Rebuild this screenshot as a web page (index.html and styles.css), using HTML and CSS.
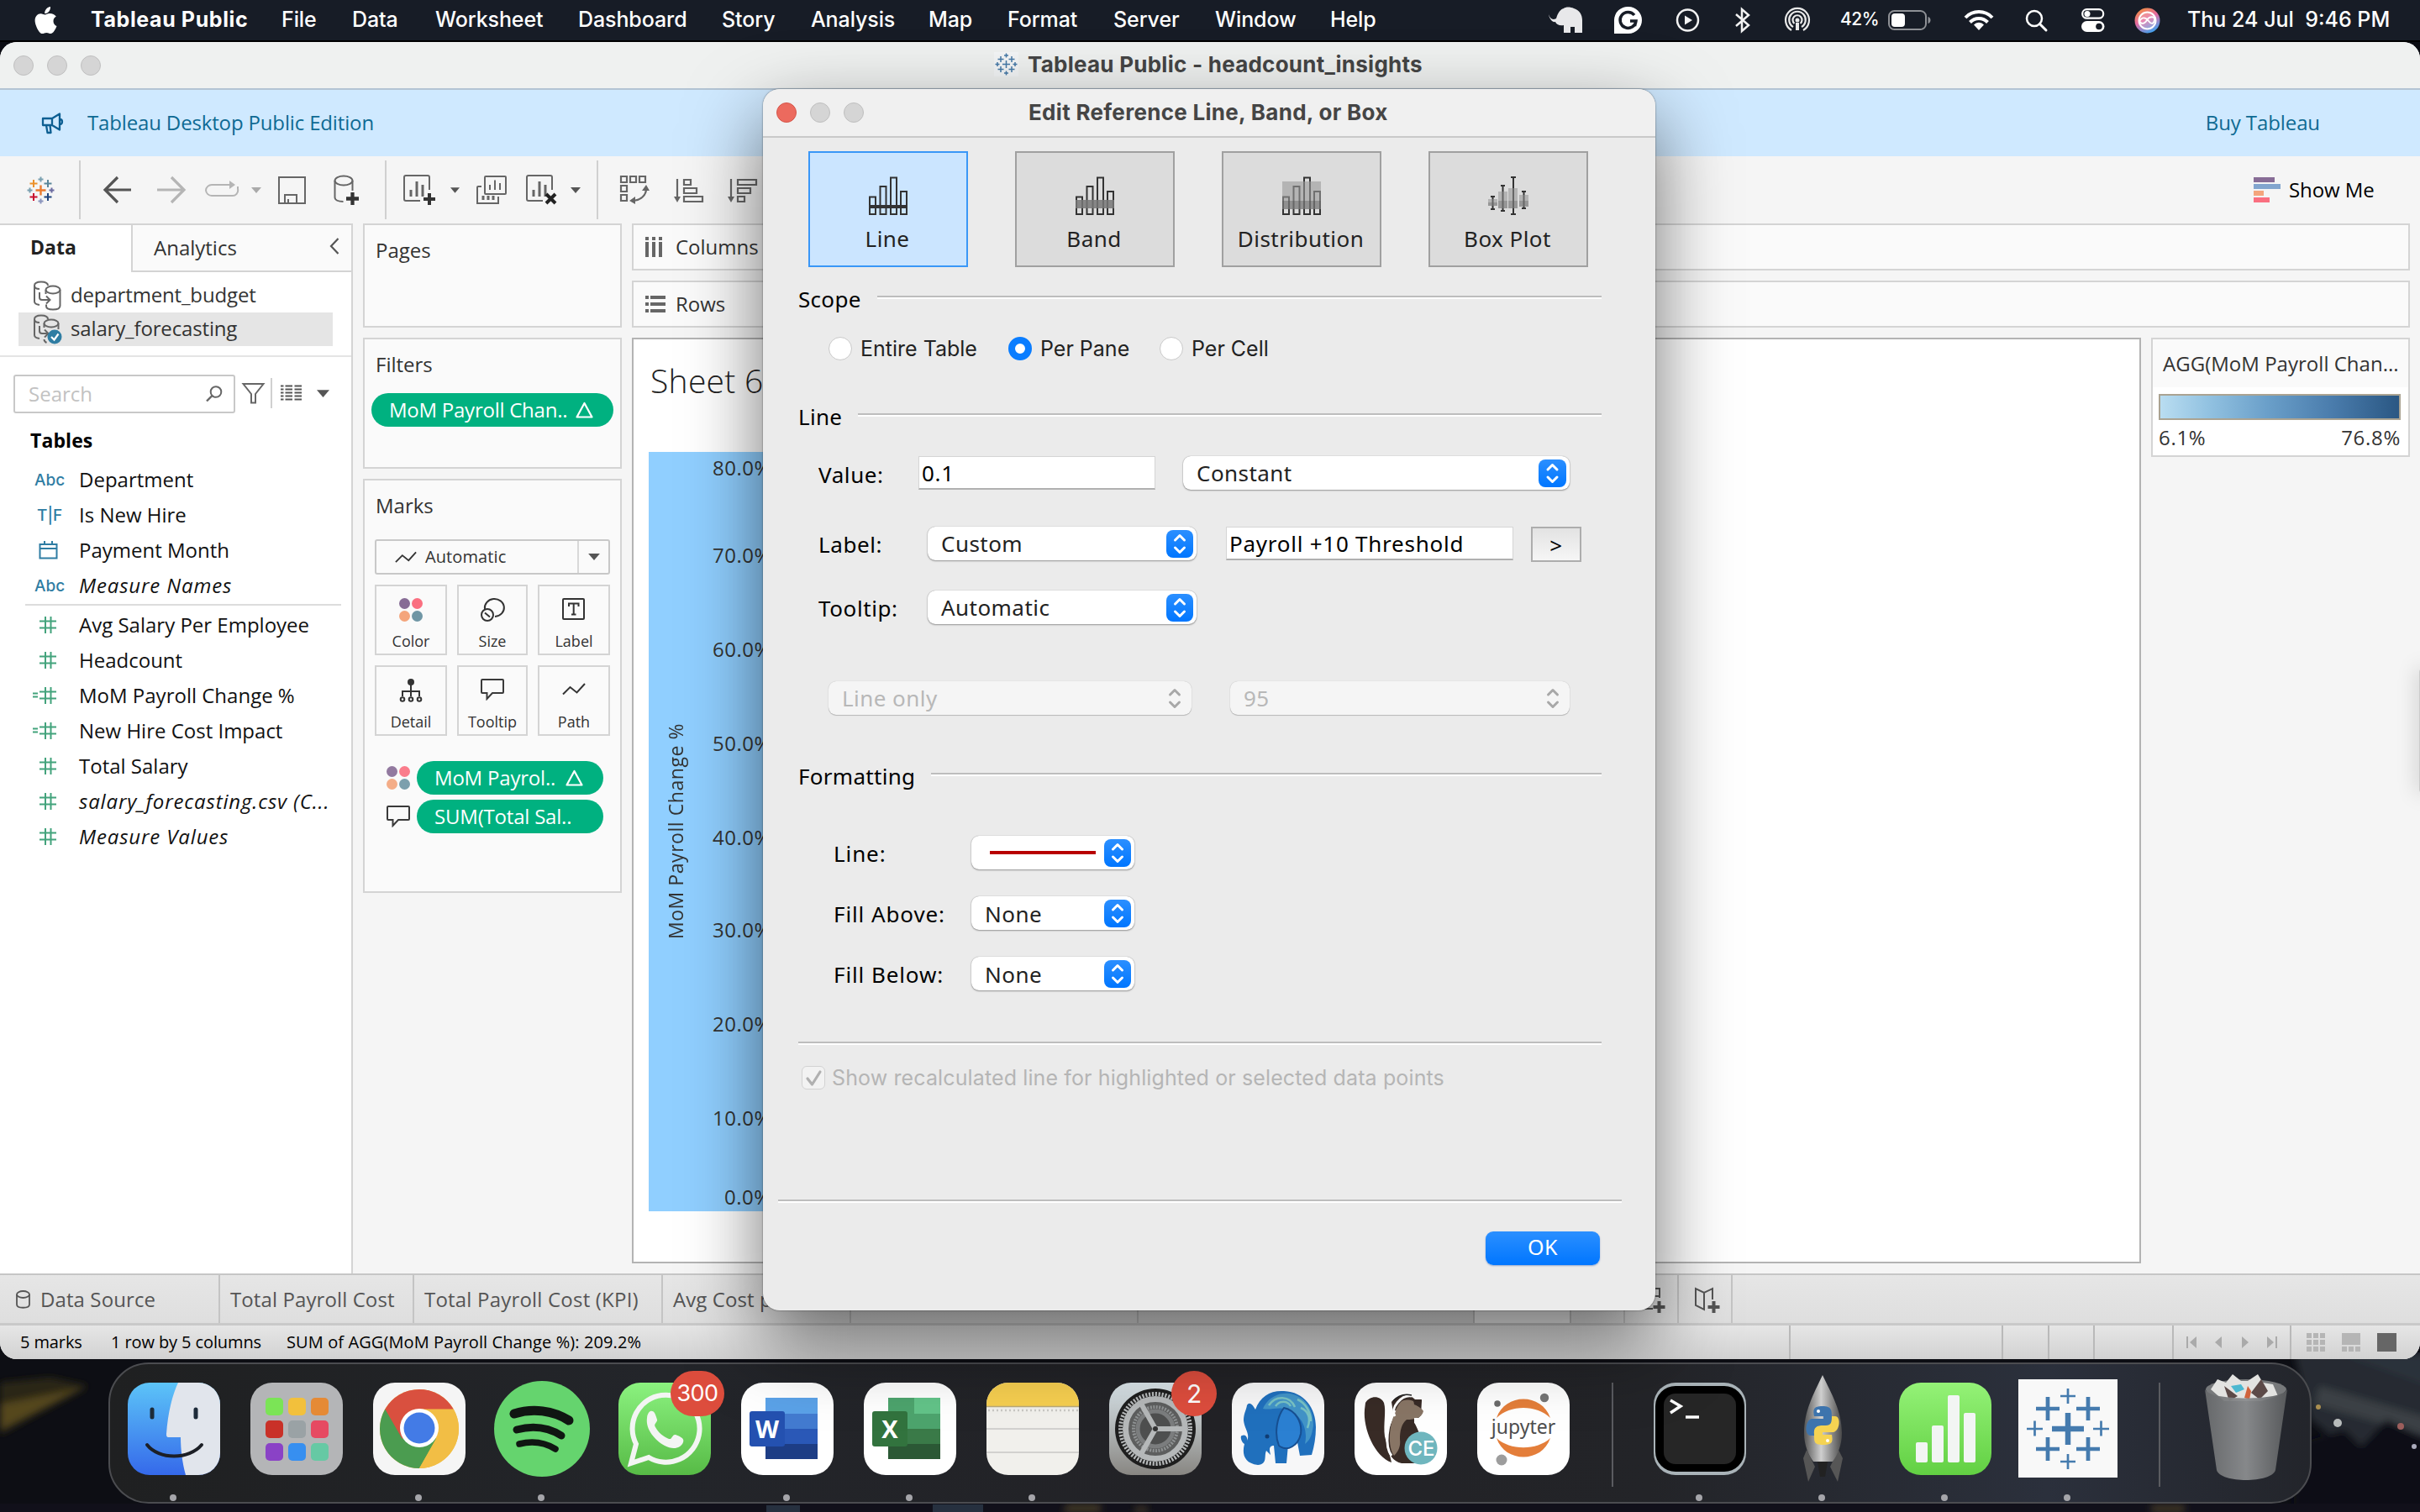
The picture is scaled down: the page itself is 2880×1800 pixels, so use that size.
FILE: index.html
```html
<!DOCTYPE html>
<html lang="en">
<head>
<meta charset="utf-8">
<title>Tableau Public - headcount_insights</title>
<link rel="stylesheet" href="styles.css">
</head>
<body>
<svg class="defs" width="0" height="0">
  <defs>
    <linearGradient id="blueBtn" x1="0" y1="0" x2="0" y2="1"><stop offset="0" stop-color="#2b8fff"/><stop offset="1" stop-color="#0076ff"/></linearGradient>
    <symbol id="plus" viewBox="0 0 14 14"><path d="M5 0h4v5h5v4H9v5H5V9H0V5h5z"/></symbol>
    <symbol id="caret" viewBox="0 0 12 7"><path d="M0 0h12L6 7z"/></symbol>
    <symbol id="dots" viewBox="0 0 28 28"><circle cx="6.5" cy="6.5" r="6.5" fill="#876c96"/><circle cx="21.5" cy="6.5" r="6.5" fill="#fa6f80"/><circle cx="6.5" cy="21.5" r="6.5" fill="#f4a57c"/><circle cx="21.5" cy="21.5" r="6.5" fill="#6f96a5"/></symbol>
    <symbol id="bubble" viewBox="0 0 28 26"><path d="M2 1h24a1 1 0 0 1 1 1v14a1 1 0 0 1-1 1H14l-6.500 7v-7H2a1 1 0 0 1-1-1V2a1 1 0 0 1 1-1z" fill="none" stroke="#3a3a3a" stroke-width="2"/></symbol>
    <symbol id="trend" viewBox="0 0 28 16"><path d="M1 14.500 9.500 6l8 6.500L27 2" fill="none" stroke="#333" stroke-width="2"/></symbol>
    <symbol id="hash" viewBox="0 0 30 22"><path d="M9 6.500h20M9 14.500h20M16 1v20M22.500 1v20" fill="none" stroke="#43a37c" stroke-width="2"/></symbol>
    <symbol id="calc" viewBox="0 0 30 22"><path d="M9 6.500h20M9 14.500h20M16 1v20M22.500 1v20M1 8.500h6M1 12.500h6" fill="none" stroke="#43a37c" stroke-width="2"/></symbol>
    <symbol id="tri" viewBox="0 0 21 20"><path d="M10.500 2 19.500 18.500h-18z" fill="none" stroke="#fff" stroke-width="2.200" stroke-linejoin="round"/></symbol>
    <symbol id="step" viewBox="0 0 32 33"><path d="M10.500 12 16 6.500l5.500 5.500M10.500 21l5.500 5.500 5.500-5.500" fill="none" stroke="currentColor" stroke-width="3" stroke-linecap="round" stroke-linejoin="round"/></symbol>
    <symbol id="bars" viewBox="0 0 46 46"><path d="M1 24.500h7V45H1zM13.500 12h7v33h-7zM26 1.500h7V45h-7zM38 18h7v27h-7z" fill="none" stroke="#333" stroke-width="2"/></symbol>
    <symbol id="db" viewBox="0 0 36 36"><path d="M18 6c0-3-3.500-4.500-8-4.500S2 3 2 6v19c0 2 2.500 3.500 6 4M2 6c0 2 2 4 6 4" fill="none" stroke="#666" stroke-width="2"/><ellipse cx="24" cy="11" rx="8.500" ry="4.500" fill="none" stroke="#666" stroke-width="2"/><path d="M15.500 11v5M32.500 11v19c0 3-4 4.500-8.500 4.500s-8-1.500-8-4v-2M8 14v6c0 2 1 3 3 3h9m-4-4.500 4.500 4.500-4.500 4.500" fill="none" stroke="#666" stroke-width="2"/></symbol>
    <symbol id="dbcheck" viewBox="0 0 36 36"><path d="M18 6c0-3-3.500-4.500-8-4.500S2 3 2 6v19c0 2 2.500 3.500 6 4M2 6c0 2 2 4 6 4" fill="none" stroke="#666" stroke-width="2"/><ellipse cx="22" cy="11" rx="8.500" ry="4.500" fill="none" stroke="#666" stroke-width="2"/><path d="M13.500 11v5M30.500 11v7M8 14v6c0 2 1 3 3 3h7m-4-4.500 4.500 4.500-4.500 4.500M13.500 30c0 2 1 3 3 4" fill="none" stroke="#666" stroke-width="2"/><circle cx="26" cy="27" r="8.500" fill="#2f7da3"/><path d="M22 27l3.500 3.500 5-7" fill="none" stroke="#fff" stroke-width="2.200"/></symbol>
    <symbol id="sheet" viewBox="0 0 38 36"><path d="M31 18V3a2 2 0 0 0-2-2H3a2 2 0 0 0-2 2v26a2 2 0 0 0 2 2h17" fill="none" stroke="#666" stroke-width="2"/><path d="M9 18v8M16 8v18M23 12v14" stroke="#666" stroke-width="3"/></symbol>
  </defs>
</svg>
<div class="desktop">
  <svg class="wallpaper" width="2880" height="190" viewBox="0 0 2880 190">
    <defs><filter id="soft" x="-5%" y="-20%" width="110%" height="140%"><feGaussianBlur stdDeviation="4"/></filter></defs>
    <rect width="2880" height="190" fill="#0d0e14"/>
    <g filter="url(#soft)">
    <path d="M0 36 60 30 105 40 0 98z" fill="#2c2819"/><path d="M0 62 100 42 0 92z" fill="#54471f"/>
    <path d="M2730 0h160v120l-60-20-30 20-50-40z" fill="#252b31"/>
    <path d="M2760 40 2890 78v22L2755 62z" fill="#3b4045"/><path d="M2780 0h110v40z" fill="#2b333a"/>
    <path d="M2730 110l60-18 20 20 30-32 50 24v96h-160z" fill="#0c0d18"/>
    </g>
    <circle cx="2782" cy="84" r="5" fill="#b8bcbc"/><circle cx="2759" cy="65" r="3" fill="#a98e50"/><circle cx="2857" cy="88" r="4" fill="#9b5e5c"/><circle cx="2873" cy="112" r="3" fill="#aab"/>
    <path d="M0 180h2880v10H0z" fill="#11101a"/>
    <path d="M1270 181h40v9h-46zM1350 184h16v6h-16zM2560 182h40v8h-40z" fill="#453a28" filter="url(#soft)"/>
    <path d="M912 182h40v8h-40zM1110 181h60v9h-60z" fill="#26303f"/>
  </svg>

  <div class="menubar">
    <svg class="apple" width="27" height="32" viewBox="0 0 27 32"><path d="M19 0c.300 2.200-.600 4.200-1.800 5.700-1.300 1.500-3.200 2.500-5 2.400C12 6 13 4 14.200 2.600 15.400 1.200 17.500.100 19 0zM25.800 11.500c-2.400 1.500-3.300 3.400-3.300 5.700 0 2.700 1.600 4.900 4 5.900-.600 2-1.700 4-3.100 6-1.200 1.600-2.300 2.900-4.200 2.900-1.900 0-2.500-1.100-4.800-1.100s-3.100 1.100-4.900 1.200c-1.800 0-3.200-1.600-4.400-3.200C2.600 25.500.600 19.700.600 16.500c0-5.200 3.300-8.300 6.900-8.300 2 0 3.700 1.300 5 1.300 1.200 0 3.200-1.400 5.500-1.400 3.600 0 6.300 1.700 7.800 3.400z" fill="#fff"/></svg>
    <span class="app-name">Tableau Public</span><span>File</span><span>Data</span><span>Worksheet</span><span>Dashboard</span><span>Story</span><span>Analysis</span><span>Map</span><span>Format</span><span>Server</span><span>Window</span><span>Help</span>
    <svg width="42" height="32" viewBox="0 0 42 32"><path d="M1 9c2 6 5 7 9 5 2-7 5-11 9-12 2-2 8-2 12 0 7 2 10 8 10 14v15h-9v-7h-5v7h-8v-9c-5 1-9-1-10-4C6 19 2 15 1 9z" fill="#e8e8ea"/></svg>
    <svg width="34" height="32" viewBox="0 0 34 32"><path d="M17 0a16 16 0 1 1 0 32H0V16A16 16 0 0 1 17 0z" fill="#fff"/><path d="M24 10a9.500 9.500 0 1 0 2 7h-7m7-.500-1.500 6.500" fill="none" stroke="#171c26" stroke-width="3.500"/></svg>
    <svg width="29" height="28" viewBox="0 0 29 28"><circle cx="14.500" cy="14" r="12.500" fill="none" stroke="#f2f2f2" stroke-width="2.500"/><path d="M11 8.500v11l9-5.500z" fill="#f2f2f2"/></svg>
    <svg width="24" height="30" viewBox="0 0 24 30"><path d="M4 8l15 13-8 7V2l8 7L4 22" fill="none" stroke="#f2f2f2" stroke-width="2.500"/></svg>
    <svg width="30" height="30" viewBox="0 0 30 30" fill="none" stroke="#e9e9e9" stroke-width="2.200"><path d="M8 27a14 14 0 1 1 14 0M10 23a9.800 9.800 0 1 1 10 0M11.500 19a5.500 5.500 0 1 1 7 0"/><circle cx="15" cy="15" r="2.500" fill="#e9e9e9" stroke="none"/><path d="M15 18v9" stroke-width="4"/></svg>
    <span class="battery-text">42%</span>
    <svg width="52" height="24" viewBox="0 0 52 24"><rect x="1" y="1" width="44" height="22" rx="6.500" fill="none" stroke="#8e9095" stroke-width="2"/><rect x="4" y="4" width="16" height="16" rx="4" fill="#fff"/><path d="M47.500 8c4 1 4 7 0 8z" fill="#8e9095"/></svg>
    <svg width="36" height="26" viewBox="0 0 36 26"><path d="M2 10a22 22 0 0 1 32 0M7.500 15.500a14.500 14.500 0 0 1 21 0" fill="none" stroke="#fff" stroke-width="4"/><path d="M18 25l-6-6.500a8 8 0 0 1 12 0z" fill="#fff"/></svg>
    <svg width="27" height="27" viewBox="0 0 27 27"><circle cx="11" cy="11" r="9" fill="none" stroke="#fff" stroke-width="2.500"/><path d="M17.500 17.500 25 25" stroke="#fff" stroke-width="3" stroke-linecap="round"/></svg>
    <svg width="28" height="28" viewBox="0 0 28 28"><rect x="1.200" y="1.200" width="25" height="10.500" rx="5.200" fill="none" stroke="#fff" stroke-width="2.200"/><circle cx="7" cy="6.500" r="3.500" fill="#fff"/><rect y="15" width="27.500" height="13" rx="6.500" fill="#fff"/><circle cx="21" cy="21.500" r="3.800" fill="#171c26"/></svg>
    <svg width="31" height="31" viewBox="0 0 31 31"><defs><linearGradient id="siri" x1=".2" y1="0" x2=".7" y2="1"><stop offset="0" stop-color="#f3923f"/><stop offset=".45" stop-color="#e66aa0"/><stop offset="1" stop-color="#37a6f5"/></linearGradient></defs><circle cx="15.500" cy="15.500" r="15" fill="url(#siri)"/><circle cx="15.500" cy="15.500" r="10" fill="#ffffff33" stroke="#fff" stroke-width="2"/><path d="M6 17c3-7 8-5 11-1s6 4 7-1-6-5-9 0-7 5-9 1" fill="none" stroke="#fff" stroke-width="1.800"/></svg>
    <span class="clock">Thu 24 Jul&nbsp; 9:46 PM</span>
  </div>

  <div class="window">
    <div class="titlebar">
      <div class="lights"><i></i><i></i><i></i></div>
      <div class="window-title">
        <svg width="29" height="29" viewBox="0 0 29 29"><rect width="29" height="29" fill="#f3f5f6"/><path d="M10 14.500h9M14.500 10v9M4.500 8.500h7M8 5v7M17.500 8.500h7M21 5v7M4.500 20.500h7M8 17v7M17.500 20.500h7M21 17v7M12 4h5M14.500 1.500v5M12 25h5M14.500 22.500v5M1.500 14.500h5M4 12v5M22.500 14.500h5M25 12v5" stroke="#4579a6" stroke-width="1.500"/></svg>
        <span>Tableau Public - headcount_insights</span>
      </div>
    </div>
    <div class="banner">
      <svg width="27" height="26" viewBox="0 0 27 26"><path d="M1 7h11l9-5.500v19L12 15H1zM5 15l1.500 9h4L9.500 15M12 7v8M21 8c4 0 4 6 0 6" fill="none" stroke="#0e5f92" stroke-width="2.300" stroke-linejoin="round"/></svg>
      <span class="edition">Tableau Desktop Public Edition</span>
      <span class="buy">Buy Tableau</span>
    </div>
    <div class="toolbar">
      <svg class="tb-logo" width="33" height="33" viewBox="0 0 33 33" fill="none" stroke-width="2"><path d="M10.500 16.500h12M16.500 10.500v12" stroke="#eb7b2e" stroke-width="2.400"/><path d="M3.500 8.500h9M8 4v9" stroke="#eb912c"/><path d="M20.500 8.500h9M25 4v9" stroke="#5b879b"/><path d="M3.500 24.500h9M8 20v9" stroke="#c8102e"/><path d="M20.500 24.500h9M25 20v9" stroke="#1f447e"/><path d="M13.500 3.500h6M16.500.500v6M.500 16.500h6M3.500 13.500v6" stroke="#7aa0b0"/><path d="M26.500 16.500h6M29.500 13.500v6" stroke="#6a6aa0"/><path d="M13.500 29.500h6M16.500 26.500v6" stroke="#8a94bd"/></svg>
      <b class="sep"></b>
      <svg width="34" height="34" viewBox="0 0 34 34"><path d="M33 17H2.500M17 2 2 17l15 15" fill="none" stroke="#555" stroke-width="3.200"/></svg>
      <svg width="35" height="34" viewBox="0 0 35 34"><path d="M1 17h31.500M18 2l15 15-15 15" fill="none" stroke="#b5b5b5" stroke-width="3.200"/></svg>
      <svg width="41" height="22" viewBox="0 0 41 22"><path d="M12 5H8a7 7 0 0 0-7 6.500A7 7 0 0 0 8 18h24a6.500 6.500 0 0 0 7-8V7M12 5h22" fill="none" stroke="#b5b5b5" stroke-width="2"/><path d="M29 0l7 5-7 5z" fill="#b5b5b5"/></svg>
      <svg width="12" height="7" fill="#aaa"><use href="#caret"/></svg>
      <svg width="33" height="33" viewBox="0 0 33 33"><path d="M1 1h31v31H1zM8 32V22h14v10M12 32v-5" fill="none" stroke="#666" stroke-width="2"/></svg>
      <svg class="drop" width="30" height="36" viewBox="0 0 30 36"><ellipse cx="12" cy="7" rx="10.500" ry="5.500" fill="none" stroke="#666" stroke-width="2"/><path d="M1.500 7v20c0 3 4 5 10 5M22.500 7v12" fill="none" stroke="#666" stroke-width="2"/><use href="#plus" x="15" y="21" width="15" height="15" fill="#333"/></svg>
      <b class="sep"></b>
      <svg class="drop" width="38" height="36" viewBox="0 0 38 36"><use href="#sheet"/><use href="#plus" x="24" y="22" width="14" height="14" fill="#333"/></svg>
      <svg width="11" height="7" fill="#555"><use href="#caret"/></svg>
      <svg class="dup" width="36" height="35" viewBox="0 0 36 35"><rect x="10" y="1" width="25" height="21" rx="1" fill="none" stroke="#666" stroke-width="2"/><path d="M16 11v6M22 5.500V17M28 9v8M6 13H2a1 1 0 0 0-1 1v19h25v-8" fill="none" stroke="#666" stroke-width="2"/><path d="M8 24v5M14 24v5M20 24v5" stroke="#666" stroke-width="3"/></svg>
      <svg class="drop" width="37" height="36" viewBox="0 0 37 36"><use href="#sheet" width="38" height="36"/><path d="M24 23l11 11M35 23 24 34" stroke="#222" stroke-width="4"/></svg>
      <svg width="12" height="7" fill="#555"><use href="#caret"/></svg>
      <b class="sep"></b>
      <svg class="swap" width="36" height="36" viewBox="0 0 36 36"><path d="M2 2h7v7H2zM13 2h7v7h-7zM24 2h7v7h-7zM2 13h7v7H2zM2 24h7v7H2zM32 17c0 7-6 13-15 14" fill="none" stroke="#666" stroke-width="2.200"/><path d="M27 19l5-7 4 7zM19 26v9l-7-4z" fill="#666"/></svg>
      <svg width="36" height="29" viewBox="0 0 36 29"><path d="M4 1v22M12 2h8v6h-8zM12 12h15v6H12zM12 22h22v6H12z" fill="none" stroke="#666" stroke-width="2.200"/><path d="M0 22h8l-4 7z" fill="#666"/></svg>
      <svg width="36" height="29" viewBox="0 0 36 29"><path d="M4 1v22M12 2h22v6H12zM12 12h15v6H12zM12 22h8v6h-8z" fill="none" stroke="#666" stroke-width="2.200"/><path d="M0 22h8l-4 7z" fill="#666"/></svg>
      <div class="show-me"><svg width="32" height="30" viewBox="0 0 32 30"><path d="M0 0h25v6H0z" fill="#876c96"/><path d="M0 8h32v6H0z" fill="#82a5ce"/><path d="M0 16h12v6H0z" fill="#f4a57c"/><path d="M0 24h19v6H0z" fill="#fa6f80"/></svg><span>Show Me</span></div>
    </div>

    <div class="workspace">
      <div class="data-pane">
        <div class="pane-tabs">
          <div class="tab-data">Data</div>
          <div class="tab-analytics">Analytics<svg width="12" height="20" viewBox="0 0 12 20"><path d="M10.500 1 2 10l8.500 9" fill="none" stroke="#555" stroke-width="2.200"/></svg></div>
        </div>
        <div class="source"><svg width="36" height="36"><use href="#db"/></svg><span>department_budget</span></div>
        <div class="source selected"><svg width="36" height="36"><use href="#dbcheck"/></svg><span>salary_forecasting</span></div>
        <div class="search-row">
          <div class="search">Search<svg width="20" height="20" viewBox="0 0 20 20"><circle cx="12" cy="7.500" r="6.300" fill="none" stroke="#666" stroke-width="2"/><path d="M7.500 12 1 18.500" stroke="#666" stroke-width="2.400"/></svg></div>
          <svg class="funnel" width="27" height="25" viewBox="0 0 27 25"><path d="M1.500 1h24L16 13v10.500h-5V13z" fill="none" stroke="#666" stroke-width="2"/></svg>
          <b></b>
          <svg width="25" height="20" viewBox="0 0 25 20"><path d="M0 1.500h3.500M0 5.500h3.500M0 9.500h3.500M0 13.500h3.500M0 17.500h3.500M5.500 1.500H14M5.500 5.500H14M5.500 9.500H14M5.500 13.500H14M5.500 17.500H14M16.500 1.500H25M16.500 5.500H25M16.500 9.500H25M16.500 13.500H25M16.500 17.500H25" stroke="#555" stroke-width="2"/></svg>
          <svg class="view-caret" width="15" height="9" fill="#555"><use href="#caret"/></svg>
        </div>
        <div class="tables">Tables</div>
        <div class="field"><em class="abc">Abc</em><span>Department</span></div>
        <div class="field"><em class="tf">T|F</em><span>Is New Hire</span></div>
        <div class="field"><svg class="cal" width="24" height="22" viewBox="0 0 24 22"><path d="M1.500 4h20v16.500h-20zM1.500 9h20M7 0v5M16 0v5" fill="none" stroke="#2f7da3" stroke-width="2"/></svg><span>Payment Month</span></div>
        <div class="field it"><em class="abc">Abc</em><span>Measure Names</span></div>
        <div class="rule"></div>
        <div class="field"><svg width="30" height="22"><use href="#hash"/></svg><span>Avg Salary Per Employee</span></div>
        <div class="field"><svg width="30" height="22"><use href="#hash"/></svg><span>Headcount</span></div>
        <div class="field"><svg width="30" height="22"><use href="#calc"/></svg><span>MoM Payroll Change %</span></div>
        <div class="field"><svg width="30" height="22"><use href="#calc"/></svg><span>New Hire Cost Impact</span></div>
        <div class="field"><svg width="30" height="22"><use href="#hash"/></svg><span>Total Salary</span></div>
        <div class="field it"><svg width="30" height="22"><use href="#hash"/></svg><span>salary_forecasting.csv (C...</span></div>
        <div class="field it"><svg width="30" height="22"><use href="#hash"/></svg><span>Measure Values</span></div>
      </div>

      <div class="cards">
        <div class="card pages"><div class="card-title">Pages</div></div>
        <div class="card filters"><div class="card-title">Filters</div>
          <div class="pill wide"><span>MoM Payroll Chan..</span><svg width="21" height="20"><use href="#tri"/></svg></div>
        </div>
        <div class="card marks"><div class="card-title">Marks</div>
          <div class="mark-type"><svg width="26" height="16"><use href="#trend"/></svg><span>Automatic</span><i><svg width="14" height="8" fill="#555"><use href="#caret"/></svg></i></div>
          <div class="mark-grid">
            <div><svg width="28" height="28"><use href="#dots"/></svg><span>Color</span></div>
            <div><svg width="29" height="28" viewBox="0 0 29 28"><path d="M5 13A11.500 10.500 0 1 1 17 22" fill="none" stroke="#333" stroke-width="2"/><circle cx="8" cy="20" r="7" fill="none" stroke="#333" stroke-width="2"/><path d="M5 17.500l6 5" stroke="#333" stroke-width="2"/></svg><span>Size</span></div>
            <div><svg width="28" height="26" viewBox="0 0 28 26"><rect x="1" y="1" width="25" height="24" rx="1" fill="none" stroke="#333" stroke-width="2"/><path d="M8 10V6.500h11.500V10M13.700 6.500v13M11 19.500h5.500" fill="none" stroke="#333" stroke-width="2"/></svg><span>Label</span></div>
            <div><svg width="28" height="28" viewBox="0 0 28 28"><circle cx="14" cy="4" r="4" fill="#333"/><path d="M14 4v17M4 21v-6h20v6" fill="none" stroke="#333" stroke-width="2"/><g fill="#fafafa" stroke="#333" stroke-width="2"><circle cx="4" cy="24.500" r="2.300"/><circle cx="14" cy="24.500" r="2.300"/><circle cx="24" cy="24.500" r="2.300"/></g></svg><span>Detail</span></div>
            <div><svg width="28" height="26"><use href="#bubble"/></svg><span>Tooltip</span></div>
            <div><svg width="28" height="26"><use href="#trend" y="4" height="16"/></svg><span>Path</span></div>
          </div>
          <div class="mark-row"><svg width="28" height="28" opacity=".9"><use href="#dots"/></svg><div class="pill"><span>MoM Payrol..</span><svg width="21" height="20"><use href="#tri"/></svg></div></div>
          <div class="mark-row"><svg width="28" height="26"><use href="#bubble"/></svg><div class="pill"><span>SUM(Total Sal..</span></div></div>
        </div>
      </div>

      <div class="sheet-area">
        <div class="shelf"><svg width="20" height="24" viewBox="0 0 20 24"><path d="M2 0v4M10 0v4M18 0v4M2 6v18M10 6v18M18 6v18" stroke="#666" stroke-width="4"/></svg><span>Columns</span></div>
        <div class="shelf"><svg width="24" height="20" viewBox="0 0 24 20"><path d="M0 2h4M0 10h4M0 18h4M6 2h18M6 10h18M6 18h18" stroke="#666" stroke-width="4"/></svg><span>Rows</span></div>
        <div class="view-row">
          <div class="canvas">
            <div class="sheet-title">Sheet 6</div>
            <div class="axis">
              <div class="axis-title"><span>MoM Payroll Change %</span></div>
              <div class="ticks"><span>80.0%</span><span>70.0%</span><span>60.0%</span><span>50.0%</span><span>40.0%</span><span>30.0%</span><span>20.0%</span><span>10.0%</span><span>0.0%</span></div>
            </div>
          </div>
          <div class="legend">
            <div class="legend-title">AGG(MoM Payroll Chan...</div>
            <div class="legend-body"><div class="ramp"></div><div class="ramp-labels"><span>6.1%</span><span>76.8%</span></div></div>
          </div>
        </div>
      </div>
    </div>

    <div class="sheet-tabs">
      <div class="ds"><svg width="17" height="22" viewBox="0 0 17 22"><ellipse cx="8.500" cy="5" rx="7.500" ry="4" fill="none" stroke="#555" stroke-width="1.800"/><path d="M1 5v12c0 5 15 5 15 0V5" fill="none" stroke="#555" stroke-width="1.800"/></svg>Data Source</div>
      <div class="t1">Total Payroll Cost</div><div class="t2">Total Payroll Cost (KPI)</div><div class="t3">Avg Cost p</div><div class="t4"></div><div class="t5"></div><div class="active"></div>
      <div class="new"></div>
      <div class="new"><svg width="34" height="34" viewBox="0 0 34 34"><path d="M25 15V4H3v24h14M3 13h22" fill="none" stroke="#555" stroke-width="2"/><use href="#plus" x="17" y="19" width="15" height="14" fill="#555"/></svg></div>
      <div class="new"><svg width="34" height="34" viewBox="0 0 34 34"><path d="M24 17V4l-10 5L4 4v20l10 5V9" fill="none" stroke="#555" stroke-width="2"/><use href="#plus" x="18" y="19" width="15" height="14" fill="#555"/></svg></div>
    </div>
    <div class="statusbar">
      <span class="s1">5 marks</span><span class="s2">1 row by 5 columns</span><span class="s3">SUM of AGG(MoM Payroll Change %): 209.2%</span>
      <b class="w1"></b><b class="w2"></b><b class="w3"></b><b class="w4"></b>
      <div class="nav"><svg width="110" height="14" viewBox="0 0 110 14" fill="#aaa"><path d="M0 0h2v14H0zM12 0v14L4 7zM42 0v14l-8-7zM66 0v14l8-7zM96 0v14l8-7zM106 0h2v14h-2z"/></svg></div>
      <svg class="views" width="108" height="22" viewBox="0 0 108 22"><path d="M0 0h6v6H0zM8 0h6v6H8zM16 0h6v6h-6zM0 8h6v6H0zM8 8h6v6H8zM16 8h6v6h-6zM0 16h6v6H0zM8 16h6v6H8zM16 16h6v6h-6zM42 0h22v14H42zM42 16h6v6h-6zM50 16h6v6h-6zM58 16h6v6h-6z" fill="#b5b5b5"/><path d="M84 0h23v22H84z" fill="#666"/></svg>
    </div>
  </div>

  <div class="dock">
    <div class="app run"><svg viewBox="0 0 110 110"><defs><linearGradient id="fb" x1="0" y1="0" x2="0" y2="1"><stop offset="0" stop-color="#5cc4f8"/><stop offset="1" stop-color="#3569ea"/></linearGradient><clipPath id="sq"><rect width="110" height="110" rx="26"/></clipPath></defs><g clip-path="url(#sq)"><rect width="110" height="110" fill="url(#fb)"/><path d="M60 0h50v110H69c-4-14-6-30-6-45H49c-3 0-3-2-3-4C48 35 53 15 60 0z" fill="#e1e5ec"/></g><path d="M29 32v9M81 32v9" stroke="#1d2b3a" stroke-width="5" stroke-linecap="round"/><path d="M23 74c14 18 50 18 65 0" fill="none" stroke="#1c1f26" stroke-width="4" stroke-linecap="round"/></svg></div>
    <div class="app"><svg viewBox="0 0 110 110"><rect width="110" height="110" rx="26" fill="#b4b5b7"/><g><rect x="18" y="18" width="21" height="21" rx="5" fill="#7be456"/><rect x="45" y="18" width="21" height="21" rx="5" fill="#f2c03c"/><rect x="72" y="18" width="21" height="21" rx="5" fill="#e58a35"/><rect x="18" y="45" width="21" height="21" rx="5" fill="#c93128"/><rect x="45" y="45" width="21" height="21" rx="5" fill="#9aa2a5"/><rect x="72" y="45" width="21" height="21" rx="5" fill="#e64a62"/><rect x="18" y="72" width="21" height="21" rx="5" fill="#8a42c6"/><rect x="45" y="72" width="21" height="21" rx="5" fill="#378ff0"/><rect x="72" y="72" width="21" height="21" rx="5" fill="#66c9a4"/></g></svg></div>
    <div class="app run"><svg viewBox="0 0 110 110"><rect width="110" height="110" rx="26" fill="#f5f5f5"/><circle cx="55" cy="55" r="47" fill="#f2be45"/><path d="M55 55 14.300 31.500A47 47 0 0 1 95.700 31.500z" fill="#d9503f"/><path d="M14.300 31.500A47 47 0 0 0 55 102L75 66.500 55 55z" fill="#4b9c50"/><path d="M55 31.500h40.700A47 47 0 0 1 55 102l20.400-35.200z" fill="#f2be45"/><path d="M14.300 31.500 34.600 66.800 55 55 55 31.500z" fill="#d9503f"/><circle cx="55" cy="54" r="23" fill="#fff"/><circle cx="55" cy="54" r="18.500" fill="#437be6"/></svg></div>
    <div class="app run"><svg viewBox="0 0 110 110"><circle cx="55" cy="55" r="57" fill="#65d46e"/><path d="M22 37c22-7 46-4 65 8" stroke="#101612" stroke-width="11" fill="none" stroke-linecap="round"/><path d="M25 56c19-5 37-3 53 7" stroke="#101612" stroke-width="9" fill="none" stroke-linecap="round"/><path d="M28 73c16-4 30-2 43 6" stroke="#101612" stroke-width="7.500" fill="none" stroke-linecap="round"/></svg></div>
    <div class="app"><svg viewBox="0 0 110 110"><defs><linearGradient id="wa" x1="0" y1="0" x2="0" y2="1"><stop offset="0" stop-color="#8bf27f"/><stop offset="1" stop-color="#57bb46"/></linearGradient></defs><rect width="110" height="110" rx="26" fill="url(#wa)"/><path d="M15 96l6-23a40 40 0 1 1 15 16z" fill="none" stroke="#f3f5f3" stroke-width="6"/><path d="M38 34c5-1 6 4 8 10 1 3-5 5-2 9 4 7 9 11 16 14 4 1 4-6 8-5 5 2 11 4 9 9-3 8-13 9-22 4C44 69 32 56 34 42c0-4 2-7 4-8z" fill="#f3f5f3"/></svg><span class="badge">300</span></div>
    <div class="app run"><svg viewBox="0 0 110 110"><rect width="110" height="110" rx="26" fill="#fff"/><path d="M29 18h62v19H29z" fill="#5ba2e8"/><path d="M29 37h62v18H29z" fill="#437bd0"/><path d="M29 55h62v18H29z" fill="#2a58b7"/><path d="M29 73h62v18H29z" fill="#1d3d85"/><rect x="10" y="34" width="42" height="42" rx="3" fill="#2451b0"/></svg><span class="office">W</span></div>
    <div class="app run"><svg viewBox="0 0 110 110"><rect width="110" height="110" rx="26" fill="#fff"/><path d="M29 18h31v37H29z" fill="#4da46d"/><path d="M60 18h31v19H60z" fill="#63c489"/><path d="M60 37h31v18H60z" fill="#4da46d"/><path d="M29 55h31v18H29z" fill="#3a7a48"/><path d="M60 55h31v18H60z" fill="#3a7a48"/><path d="M29 73h62v18H29z" fill="#2b5835"/><rect x="10" y="34" width="42" height="42" rx="3" fill="#32733e"/></svg><span class="office">X</span></div>
    <div class="app run"><svg viewBox="0 0 110 110"><g clip-path="url(#sq)"><rect width="110" height="110" fill="#f1f0ec"/><rect width="110" height="28" fill="#f7cf50"/><path d="M0 28.500h110" stroke="#b9a878" stroke-width="1.500"/><path d="M2 33h108" stroke="#c9c8c4" stroke-width="2.500" stroke-dasharray="2 3"/><path d="M0 55h110M0 83h110" stroke="#d2d1cf" stroke-width="1.800"/></g></svg></div>
    <div class="app"><svg viewBox="0 0 110 110"><defs><linearGradient id="st" x1="0" y1="0" x2="0" y2="1"><stop offset="0" stop-color="#dbe6eb"/><stop offset="1" stop-color="#888682"/></linearGradient></defs><rect width="110" height="110" rx="26" fill="url(#st)"/><circle cx="55" cy="55" r="48" fill="#1e1e1e"/><circle cx="55" cy="55" r="41.500" fill="none" stroke="#b5b8b9" stroke-width="5" stroke-dasharray="2.200 1.700"/><circle cx="55" cy="55" r="35.500" fill="#5d5e5e" stroke="#b5b8b9" stroke-width="7"/><circle cx="55" cy="55" r="26" fill="none" stroke="#8f9293" stroke-width="4" stroke-dasharray="2 1.500"/><circle cx="55" cy="55" r="21" fill="#4e4f4f" stroke="#7b7d7e" stroke-width="5"/><path d="M55 55h34M55 55 38 25M55 55 38 85" stroke="#b5b8b9" stroke-width="6"/><circle cx="55" cy="55" r="3" fill="#333"/></svg><span class="badge one">2</span></div>
    <div class="app"><svg viewBox="0 0 110 110"><rect width="110" height="110" rx="26" fill="#f7f7f8"/><path d="M18 27c3-6 8 1 10 5C34 16 46 9 62 10c24 1 38 20 38 43 0 12-2 23-5 33l-14 1-3-16-11 3-2 22H52l-2-21c-8 0-4 9-4 11l-5-5c-3 6 2 16-10 17C14 96 12 84 15 73c-3-1-6-9-3-10 4-2 7 2 6 6 4-8-3-14-4-24 0-8 3-12 4-18z" fill="#2070bd"/><path d="M37 31c5-12 18-20 32-18 18 3 28 18 28 38-2 14-5 18-10 22 4-18-4-36-24-42-10-2-18 2-26 0z" fill="#4294c8"/><path d="M62 30c-8 10-12 30-6 45 10 8 23 0 26-14 2-14-6-28-20-31z" fill="#2b80d2" stroke="#174f91" stroke-width="2"/><path d="M44 27c8-12 25-12 31 2M52 28c5-7 14-7 18 0M82 30c10 4 12 14 8 24M78 20c10 4 16 16 16 26" fill="none" stroke="#79c3c4" stroke-width="2.500"/><circle cx="42" cy="64" r="2.500" fill="#103d73"/></svg></div>
    <div class="app"><svg viewBox="0 0 110 110"><rect width="110" height="110" rx="26" fill="#fff"/><path d="M13 24c5-9 18-9 22 0 3 10-1 25 1 40 3 12 6 21 8 31C24 88 10 55 12 32z" fill="#382b26"/><path d="M44 23c7-9 20-11 28-3l8 1-1 18-8 8c8 16 12 26 8 49H56C36 92 34 62 47 42z" fill="#382b26"/><path d="M55 23c-12 14-18 50-8 64 6-6 8-12 7-20 0-10 2-18 8-23 10 0 18-2 20-10-2-4-9-6-12-12-6-2-11-2-15 1z" fill="#887565"/><path d="M71 42h5v9l-5-3z" fill="#fff"/><path d="M48 33c-9 16-13 42-4 54M48 40c-6-10 8-26 20-24" fill="none" stroke="#fff" stroke-width="3"/><path d="M46 22c6-7 13-9 22-7" fill="none" stroke="#222" stroke-width="1.500"/><path d="M70 20h10l-2 9-7-3z" fill="#382b26"/><circle cx="79" cy="78" r="19.500" fill="#6fb6be"/></svg><span class="ce">CE</span></div>
    <div class="app"><svg viewBox="0 0 110 110"><rect width="110" height="110" rx="26" fill="#fff"/><path d="M23 42c10-30 54-30 64 0-16-16-48-16-64 0zM23 66c10 30 54 30 64 0-16 15-48 15-64 0z" fill="#e47e3a"/><circle cx="24" cy="25" r="3.800" fill="#6b6b6b"/><circle cx="80" cy="18" r="5.200" fill="#767676"/><circle cx="29" cy="92" r="6.500" fill="#9d9d9d"/></svg><span class="jup">jupyter</span></div>
    <b class="dock-sep s-a"></b>
    <div class="app run"><svg viewBox="0 0 110 110"><rect width="110" height="110" rx="26" fill="#a9b3b8"/><rect x="2" y="4" width="106" height="102" rx="24" fill="#000"/><rect x="12" y="13" width="86" height="84" rx="14" fill="#262626"/><path d="M20 21l12 7-12 8M38 41h16" fill="none" stroke="#fff" stroke-width="3.500"/></svg></div>
    <div class="app run"><svg viewBox="0 0 110 110"><defs><linearGradient id="rk"><stop offset="0" stop-color="#555"/><stop offset=".45" stop-color="#cfcfcf"/><stop offset="1" stop-color="#4a4a4a"/></linearGradient></defs><path d="M36 80l-4 10 6 28 8-18zM74 80l5 10-6 28-9-18z" fill="#565656"/><path d="M55-9C44 14 33 34 33 60c0 14 5 26 11 34h23c6-8 11-20 11-34C78 34 66 14 55-9z" fill="url(#rk)"/><path d="M49 94h12l-3 18h-6z" fill="#222"/><path d="M55 28c-12 0-11 5-10 12h11v3H42c-8 2-9 20-1 20h4c0-10 2-11 10-11s12-2 11-10c0-9 0-14-11-14z" fill="#3d74ad"/><path d="M56 74c12 0 11-5 10-12H55v-3h13c8-2 9-19 2-19h-4c0 10-2 11-10 11s-12 2-11 11c0 9 0 12 11 12z" fill="#f5d352"/><circle cx="50" cy="34" r="2" fill="#fff"/><circle cx="61" cy="69" r="2" fill="#fff"/></svg></div>
    <div class="app run"><svg viewBox="0 0 110 110"><defs><linearGradient id="nm" x1="0" y1="0" x2="0" y2="1"><stop offset="0" stop-color="#94f277"/><stop offset="1" stop-color="#62d043"/></linearGradient></defs><rect width="110" height="110" rx="26" fill="url(#nm)"/><g fill="#f2f5f3"><rect x="20" y="71" width="14" height="24" rx="2"/><rect x="39" y="51" width="14" height="44" rx="2"/><rect x="58" y="15" width="14" height="80" rx="2"/><rect x="77" y="36" width="14" height="59" rx="2"/></g></svg></div>
    <div class="app run"><svg viewBox="0 0 110 110"><rect x="-4" y="-4" width="118" height="117" fill="#f8f8f8"/><g stroke="#457bae" fill="none"><path d="M36 55h38M55 36v38" stroke-width="6.500"/><path d="M17 31h28M31 17v28M65 31h28M79 17v28M17 79h28M31 65v28M65 79h28M79 65v28" stroke-width="4.700"/><path d="M46 16h18M55 7v18M46 94h18M55 85v18M6 55h19M15.500 45.500v18M85 55h19M94.500 45.500v18" stroke-width="2.700"/></g></svg></div>
    <b class="dock-sep s-b"></b>
    <div class="app"><svg viewBox="0 0 110 110"><defs><linearGradient id="tr"><stop offset="0" stop-color="#6a6c6e"/><stop offset=".5" stop-color="#8b8d8f"/><stop offset="1" stop-color="#5a5c5e"/></linearGradient></defs><ellipse cx="56" cy="8" rx="48" ry="12" fill="#77797b"/><path d="M14 8l8-12 10 4 8-10 10 8 8 0 12-8 6 10 12 2 6 14-20 6H30z" fill="#e3e3e1"/><path d="M30 4l16 12-10 6zM62 12l12-16 8 14-10 10z" fill="#5c4a48"/><path d="M38 4l12-2 4 6-10 4z" fill="#4cb8d0"/><path d="M54 18l4-14 4 6-2 10z" fill="#d0623c"/><path d="M7 8c6 14 92 14 98 0L91 104c-4 16-66 16-70 0z" fill="url(#tr)" opacity=".95"/></svg></div>
  </div>

  <div class="dialog">
    <div class="dialog-title"><div class="lights"><i class="close"></i><i></i><i></i></div><span>Edit Reference Line, Band, or Box</span></div>
    <div class="kinds">
      <div class="kind on"><svg width="46" height="46"><use href="#bars"/><path d="M0 34h46v4H0z" fill="#333"/></svg><span>Line</span></div>
      <div class="kind"><svg width="46" height="46"><use href="#bars"/><path d="M0 28h46v10H0z" fill="#777" opacity=".85"/></svg><span>Band</span></div>
      <div class="kind"><svg width="46" height="46"><use href="#bars"/><path d="M0 6h46v23H0z" fill="#999" opacity=".6"/><path d="M0 29h46v10H0z" fill="#777" opacity=".75"/></svg><span>Distribution</span></div>
      <div class="kind"><svg width="48" height="46" viewBox="0 0 48 46"><path d="M0 27h11v8H0zM12 18h11v20H12zM24 14h11v24H24zM37 22h11v14H37z" fill="#b4b4b4"/><path d="M0 31h11v4H0zM12 29h11v9H12zM24 29h11v9H24zM37 29h11v7H37z" fill="#979797"/><path d="M5.500 24v3M5.500 35v4M17.500 11v7M17.500 38v3M30 1v13M30 38v7M42.500 18v4M42.500 36v2M3 24h5M3 39h5M15 11h5M15 41h5M27 1h6M27 45h6M40 18h5M40 38h5" stroke="#333" stroke-width="2"/><path d="M5.500 27v8M17.500 18v20M30 14v24M42.500 22v14" stroke="#666" stroke-width="2"/></svg><span>Box Plot</span></div>
    </div>
    <div class="group g-scope"><span>Scope</span><hr></div>
    <div class="radios"><label><i></i>Entire Table</label><label><i class="on"></i>Per Pane</label><label><i></i>Per Cell</label></div>
    <div class="group g-line"><span>Line</span><hr></div>
    <div class="form-row r-value"><span class="lbl">Value:</span><div class="input i-value">0.1</div><div class="combo c-value">Constant<svg width="33" height="33"><rect width="33" height="33" rx="8" fill="url(#blueBtn)"/><use href="#step"/></svg></div></div>
    <div class="form-row r-label"><span class="lbl">Label:</span><div class="combo c-label">Custom<svg width="32" height="33"><rect width="32" height="33" rx="8" fill="url(#blueBtn)"/><use href="#step"/></svg></div><div class="input i-label">Payroll +10 Threshold</div><div class="more">&gt;</div></div>
    <div class="form-row r-tooltip"><span class="lbl">Tooltip:</span><div class="combo c-label">Automatic<svg width="32" height="33"><rect width="32" height="33" rx="8" fill="url(#blueBtn)"/><use href="#step"/></svg></div></div>
    <div class="form-row r-off"><div class="combo off c-off">Line only<svg width="32" height="33"><use href="#step"/></svg></div><div class="combo off c-95">95<svg width="32" height="33"><use href="#step"/></svg></div></div>
    <div class="group g-format"><span>Formatting</span><hr></div>
    <div class="form-row r-fmt"><span class="lbl">Line:</span><div class="combo c-fmt"><b></b><svg width="32" height="33"><rect width="32" height="33" rx="8" fill="url(#blueBtn)"/><use href="#step"/></svg></div></div>
    <div class="form-row r-fmt"><span class="lbl">Fill Above:</span><div class="combo c-fmt"><span>None</span><svg width="32" height="33"><rect width="32" height="33" rx="8" fill="url(#blueBtn)"/><use href="#step"/></svg></div></div>
    <div class="form-row r-fmt"><span class="lbl">Fill Below:</span><div class="combo c-fmt"><span>None</span><svg width="32" height="33"><rect width="32" height="33" rx="8" fill="url(#blueBtn)"/><use href="#step"/></svg></div></div>
    <hr class="hr-a">
    <div class="recalc"><i><svg width="28" height="28" viewBox="0 0 28 28"><path d="M6 14l5.500 7L21 6" fill="none" stroke="#b0b0b0" stroke-width="3.200" stroke-linecap="round" stroke-linejoin="round"/></svg></i>Show recalculated line for highlighted or selected data points</div>
    <hr class="hr-b">
    <div class="ok">OK</div>
  </div>
  <div class="edge"></div>
</div>
</body>
</html>
```
FILE: styles.css
```css
* { box-sizing: border-box; }
body { margin: 0; background: #0b0c12; }
.defs { position: absolute; }
i, em { font-style: normal; }
svg { flex: none; display: block; overflow: visible; }
.desktop {
  position: relative; width: 2880px; height: 1800px; overflow: hidden;
  font-family: "Open Sans", "Liberation Sans", sans-serif; font-size: 24px; color: #333; white-space: nowrap;
}
.wallpaper { position: absolute; left: 0; bottom: 0; overflow: hidden; }

/* menu bar */
.menubar {
  position: relative; height: 50px; background: #171c26; border-bottom: 2px solid #000; padding-left: 41px;
  display: grid; align-items: center;
  grid-template-columns: 67px 227px 84px 99px 170px 171px 106px 140px 94px 126px 121px 137px 259px 79px 73px 68px 62px 66px 57px 90px 73px 67px 63px 63px auto;
  font: 500 25px/46px Inter, "Liberation Sans", sans-serif; color: #fff; letter-spacing: -.1px;
}
.menubar span { padding-bottom: 2px; }
.app-name { font-weight: 700; letter-spacing: .6px; }
.battery-text { font-size: 21px; letter-spacing: -.5px; }
.clock { letter-spacing: 0; }

/* main window */
.window {
  position: relative; height: 1568px; border-radius: 20px; overflow: hidden; background: #f5f5f5;
  display: flex; flex-direction: column;
}
.titlebar { height: 57px; flex: none; background: #eff1f0; border-bottom: 2px solid #b3c4d3; display: grid; grid-template-columns: 1183px auto; align-items: center; }
.lights { display: flex; gap: 16px; padding-left: 16px; }
.lights i { width: 24px; height: 24px; border-radius: 50%; background: #d5d5d5; border: 1px solid #bfbfbf; }
.lights .close { background: #ec6a5e; border-color: #d5554a; }
.window-title { display: flex; align-items: center; gap: 11px; font: 700 26px/30px Inter, sans-serif; color: #454545; letter-spacing: .25px; padding-bottom: 2px; }
.banner { height: 79px; flex: none; background: #cfe9ff; display: flex; align-items: center; color: #0e6a93; padding-left: 50px; }
.edition { margin-left: 27px; letter-spacing: -.15px; padding-bottom: 2px; }
.buy { margin-left: auto; margin-right: 119px; padding-bottom: 2px; letter-spacing: -.1px; }
.toolbar { height: 80px; flex: none; display: flex; align-items: center; padding-left: 32px; }
.sep { width: 2px; height: 70px; background: #d0d0d0; }
.toolbar > :nth-child(2) { margin-left: 29px; }
.toolbar > :nth-child(3) { margin-left: 27px; }
.toolbar > :nth-child(4) { margin-left: 29px; }
.toolbar > :nth-child(5) { margin-left: 23px; }
.toolbar > :nth-child(6) { margin-left: 14px; }
.toolbar > :nth-child(7) { margin-left: 20px; }
.toolbar > :nth-child(8) { margin-left: 33px; }
.toolbar > :nth-child(9) { margin-left: 31px; }
.toolbar > :nth-child(10) { margin-left: 20px; }
.toolbar > :nth-child(11) { margin-left: 18px; }
.toolbar > :nth-child(12) { margin-left: 20px; }
.toolbar > :nth-child(13) { margin-left: 23px; }
.toolbar > :nth-child(14) { margin-left: 16px; }
.toolbar > :nth-child(15) { margin-left: 19px; }
.toolbar > :nth-child(16) { margin-left: 25px; }
.toolbar > :nth-child(17) { margin-left: 29px; }
.toolbar > :nth-child(18) { margin-left: 28px; }
.show-me { margin-left: auto; width: 198px; display: flex; align-items: center; gap: 10px; color: #000; letter-spacing: -.1px; }
.show-me span { padding-bottom: 2px; }

.workspace { height: 1250px; flex: none; display: grid; grid-template-columns: 420px 308px 2116px; column-gap: 12px; }

/* data pane */
.data-pane { background: #fff; border-right: 2px solid #d4d4d4; border-top: 2px solid #d4d4d4; }
.pane-tabs { display: flex; height: 56px; }
.tab-data { width: 156px; padding-left: 36px; line-height: 52px; font-weight: 700; font-size: 23px; color: #222; }
.tab-analytics { flex: 1; background: #fafafa; border-left: 2px solid #d4d4d4; border-bottom: 2px solid #d4d4d4; padding: 0 14px 2px 25px; display: flex; align-items: center; justify-content: space-between; }
.tab-analytics svg { margin-top: -2px; }
.source { margin: 0 22px; height: 40px; display: flex; align-items: center; padding-left: 17px; gap: 9px; letter-spacing: -.15px; }
.source span { padding-bottom: 3px; }
.pane-tabs + .source { margin-top: 8px; }
.source.selected { background: #e5e5e5; }
.search-row { margin-top: 11px; border-top: 2px solid #e4e4e4; height: 70px; padding: 21px 0 0 16px; display: flex; align-items: flex-start; }
.search { width: 264px; height: 46px; border: 2px solid #c8c8c8; border-radius: 3px; color: #c2c2c2; display: flex; align-items: center; justify-content: space-between; padding: 0 13px 1px 16px; }
.funnel { margin: 10px 0 0 8px; }
.search-row b { width: 2px; height: 36px; background: #d0d0d0; margin: 4px 10px 0 7px; }
.search-row b + svg { margin-top: 12px; }
.view-caret { margin: 18px 0 0 18px; }
.tables { padding-left: 36px; height: 57px; line-height: 62px; font-weight: 700; font-size: 23px; color: #000; letter-spacing: .1px; }
.field { height: 42px; display: grid; grid-template-columns: 56px auto; padding-left: 38px; align-items: center; color: #111; }
.field span { padding-bottom: 2px; }
.field.it span { font-style: italic; letter-spacing: .85px; }
.field em { color: #2f7da3; font: 500 19px/22px Inter, sans-serif; padding: 2px 0 0 3px; }
.field .tf { padding-left: 6px; letter-spacing: 0; }
.field .cal { margin-left: 8px; }
.rule { height: 2px; margin: 1px 12px 2px 30px; background: #dcdcdc; }

/* cards */
.cards { display: flex; flex-direction: column; gap: 12px; }
.card { background: #fafafa; border: 2px solid #d4d4d4; padding: 0 12px; }
.card-title { padding-left: 1px; line-height: 59px; height: 62px; }
.pages { height: 124px; } .filters { height: 156px; padding: 0 8px; } .marks { height: 493px; }
.filters .card-title { padding-left: 5px; }
.pill { width: 222px; height: 40px; border-radius: 20px; background: #00b180; color: #fff; display: flex; align-items: center; padding-left: 21px; gap: 12px; letter-spacing: -.2px; }
.pill span { padding-bottom: 2px; }
.pill.wide { width: 288px; margin-top: 2px; gap: 10px; letter-spacing: -.25px; }
.mark-type { width: 280px; margin-top: 8px; height: 42px; border: 2px solid #c8c8c8; border-radius: 3px; display: flex; align-items: center; font-size: 20px; padding-left: 22px; }
.mark-type span { margin-left: 10px; letter-spacing: .1px; padding-bottom: 1px; }
.mark-type i { margin-left: auto; width: 37px; height: 100%; border-left: 2px solid #d8d8d8; display: flex; align-items: center; justify-content: center; }
.mark-grid { display: grid; grid-template-columns: 86px 84px 86px; column-gap: 12px; row-gap: 12px; margin-top: 12px; }
.mark-grid div { height: 84px; border: 2px solid #d4d4d4; display: flex; flex-direction: column; align-items: center; padding-top: 14px; font-size: 18px; }
.mark-grid span { line-height: 24px; margin-top: auto; margin-bottom: 3px; }
.mark-row { display: flex; align-items: center; gap: 8px; height: 40px; margin: 30px 0 0 14px; }
.mark-row + .mark-row { margin-top: 6px; }
.mark-row > svg { width: 28px; }

/* shelves, canvas, legend */
.sheet-area { display: flex; flex-direction: column; gap: 12px; }
.shelf { height: 56px; border: 2px solid #d4d4d4; background: #fafafa; display: grid; grid-template-columns: 36px auto; align-items: center; padding-left: 14px; }
.shelf span { padding-bottom: 2px; }
.view-row { display: grid; grid-template-columns: 1796px 308px; column-gap: 12px; align-items: start; }
.canvas { height: 1102px; border: 2px solid #b3b3b3; background: #fff; padding-left: 18px; }
.sheet-title { height: 134px; line-height: 97px; font-size: 39px; font-weight: 300; letter-spacing: .3px; padding-left: 2px; color: #222; }
.axis { width: 260px; height: 904px; background: #90cfff; display: flex; }
.axis-title { width: 64px; display: flex; align-items: center; justify-content: center; }
.axis-title span { writing-mode: vertical-rl; transform: rotate(180deg); font-size: 23px; letter-spacing: .55px; }
.ticks { display: grid; grid-template-rows: 104px 112px 112px 112px 110px 112px 112px 94px 30px; padding: 4px 0 0 12px; line-height: 30px; letter-spacing: .5px; }
.ticks span:last-child { padding-left: 14px; }
.legend { height: 142px; border: 2px solid #d4d4d4; background: #fff; }
.legend-title { height: 57px; background: #fafafa; line-height: 58px; padding-left: 12px; letter-spacing: .02px; }
.legend-body { padding: 8px 9px 0 7px; }
.ramp { height: 31px; border: 2px solid #aaa392; background: linear-gradient(90deg, #b9ddf1, #92c2e1 20%, #6a9fc9 45%, #4a7cac 72%, #2a5783); }
.ramp-labels { display: flex; justify-content: space-between; line-height: 42px; letter-spacing: .7px; }

/* bottom bars */
.sheet-tabs { height: 62px; flex: none; border-top: 2px solid #c6c6c6; border-bottom: 3px solid #c9c9c9; background: linear-gradient(#e6e6e6, #dedede); display: flex; color: #555; line-height: 58px; letter-spacing: .1px; }
.sheet-tabs > div { border-right: 2px solid #c4c4c4; padding-left: 12px; overflow: hidden; }
.sheet-tabs .ds { width: 262px; padding-left: 19px; display: flex; align-items: center; gap: 12px; }
.t1 { width: 231px; } .t2 { width: 296px; letter-spacing: .2px; } .t3 { width: 224px; } .t4 { width: 342px; } .t5 { width: 400px; }
.sheet-tabs .active { width: 115px; background: #f4f4f4; }
.sheet-tabs .new { width: 64px; display: flex; align-items: center; padding-left: 16px; }
.statusbar { height: 40px; flex: none; background: linear-gradient(#e6e6e6, #d2d2d2); display: flex; align-items: center; padding-left: 24px; color: #000; font-size: 20px; line-height: 40px; }
.statusbar span { letter-spacing: -.1px; }
.statusbar .s1 { width: 108px; } .statusbar .s2 { width: 209px; } .statusbar .s3 { width: 1788px; letter-spacing: .1px; }
.statusbar b { height: 40px; border-left: 2px solid #b9b9b9; flex: none; }
.w1 { width: 253px; } .w2 { width: 55px; } .w3 { width: 54px; } .w4 { width: 94px; }
.nav { width: 142px; height: 40px; border: solid #b9b9b9; border-width: 0 2px; display: flex; align-items: center; padding-left: 15px; }
.views { margin-left: 18px; }

/* dock */
.dock { position: relative; margin: 4px auto 0; width: 2622px; height: 168px; border: 2px solid #4b4c50; border-radius: 48px; background: linear-gradient(90deg, #1f2021, #23252a 25%, #222226 50%, #232428 70%, #2b303c 88%, #23252b); padding: 22px 0 0 21px; display: flex; }
.app { position: relative; width: 110px; height: 110px; margin-right: 36px; flex: none; }
.app > svg { width: 110px; height: 110px; }
.run::after { content: ""; position: absolute; left: 50px; top: 133px; width: 8px; height: 8px; border-radius: 50%; background: #a5a5aa; }
.dock-sep { flex: none; width: 2px; height: 124px; background: #5a5b60; }
.s-a { margin: 0 48px 0 14px; } .s-b { margin: 0 46px 0 17px; }
.badge { position: absolute; left: 62px; top: -14px; min-width: 64px; height: 54px; border-radius: 27px; background: #dd4d3d; color: #fff; text-align: center; font: 400 27px/54px Inter, sans-serif; letter-spacing: -.5px; }
.badge.one { left: 74px; min-width: 54px; font-size: 30px; }
.office { position: absolute; left: 10px; top: 34px; width: 42px; text-align: center; color: #fff; font: 700 29px/42px "Open Sans", sans-serif; }
.ce { position: absolute; left: 60px; top: 60px; width: 39px; text-align: center; color: #fff; font: 500 24px/38px Inter, sans-serif; }
.jup { position: absolute; left: 0; top: 38px; width: 110px; text-align: center; color: #4e4e4e; font: 400 23px/28px "Noto Sans", sans-serif; }

/* dialog */
.dialog {
  position: absolute; left: 908px; top: 106px; width: 1062px; height: 1454px; border-radius: 20px; background: #ebebeb;
  box-shadow: 0 0 2px rgba(0,0,0,.6), 0 36px 90px rgba(0,0,0,.55);
  font-family: "Noto Sans", "Liberation Sans", sans-serif; font-size: 26px; line-height: 34px; color: #000; letter-spacing: .45px;
}
.dialog-title { height: 58px; border-bottom: 2px solid #c9c9c9; background: #f0f0f0; border-radius: 20px 20px 0 0; display: grid; grid-template-columns: 316px auto; align-items: center; font: 700 26px/32px Inter, sans-serif; letter-spacing: .3px; color: #454545; padding-bottom: 1px; }
.kinds { display: flex; gap: 56px; padding: 16px 0 0 54px; height: 154px; }
.kind { width: 190px; height: 138px; border: 2px solid #a0a0a0; background: #dcdcdc; display: flex; flex-direction: column; align-items: center; padding-top: 28px; color: #222; }
.kind.on { border-color: #3a97f7; background: #cbe5ff; }
.kind span { margin: 11px 2px 0 0; }
.group { display: flex; align-items: center; gap: 19px; margin: 0 64px 0 42px; height: 34px; letter-spacing: .3px; }
.group span { padding-bottom: 2px; }
hr { margin: 0; border: 0; height: 4px; background: linear-gradient(#bdbdbd 50%, #fff 50%); }
.group hr { flex: 1; margin-top: -6px; }
.g-scope { margin-top: 22px; }
.radios { margin-top: 24px; height: 34px; padding-left: 78px; display: grid; grid-template-columns: 214px 180px auto; font-family: Inter, sans-serif; font-size: 25px; letter-spacing: 0; color: #222; }
.radios label { display: flex; align-items: center; gap: 10px; }
.radios i { width: 28px; height: 28px; border-radius: 50%; background: #fff; border: 1px solid #c9c9c9; }
.radios .on { border: 8px solid #0a7dff; }
.g-line { margin-top: 48px; }
.form-row { display: flex; height: 40px; align-items: center; padding-left: 66px; }
.lbl { flex: none; letter-spacing: .6px; }
.combo { position: relative; height: 40px; border-radius: 9px; background: #fff; box-shadow: 0 0 1px rgba(0,0,0,.4), 0 1px 2px rgba(0,0,0,.35); display: flex; align-items: center; justify-content: space-between; padding: 0 4px 0 16px; color: #222; flex: none; }
.combo svg { color: #fff; }
.combo.off { background: #f5f5f5; color: #b8b8b8; box-shadow: 0 0 1px rgba(0,0,0,.25), 0 1px 1px rgba(0,0,0,.2); }
.combo.off svg { color: #a8a8a8; }
.input { height: 40px; background: #fff; border: 1px solid #d5d5d5; border-bottom: 2px solid #b0b0b0; padding-left: 3px; flex: none; line-height: 38px; letter-spacing: .75px; }
.r-value { margin-top: 29px; }
.r-value .lbl { width: 119px; padding-top: 4px; }
.i-value { width: 282px; } .c-value { width: 460px; margin-left: 33px; }
.r-label { margin-top: 44px; } .r-tooltip { margin-top: 36px; }
.r-label .lbl, .r-tooltip .lbl { width: 130px; padding-top: 2px; }
.c-label { width: 320px; }
.i-label { width: 342px; margin-left: 35px; }
.more { width: 60px; height: 42px; margin-left: 21px; border: 2px solid #adadad; background: linear-gradient(#e3e3e3, #f6f6f6); text-align: center; line-height: 40px; margin-top: 2px; }
.r-off { margin-top: 68px; padding-left: 78px; }
.c-off { width: 432px; } .c-95 { width: 404px; margin-left: 46px; }
.g-format { margin-top: 57px; }
.r-fmt { padding-left: 84px; margin-top: 32px; }
.g-format + .r-fmt { margin-top: 53px; }
.r-fmt .lbl { width: 164px; padding-top: 1px; letter-spacing: .9px; }
.c-fmt { width: 194px; }
.c-fmt span { padding-top: 2px; }
.c-fmt b { width: 126px; height: 4px; background: #b80000; margin-left: 6px; }
.hr-a { margin: 61px 64px 0 42px; }
.recalc { margin: 23px 0 0 46px; height: 34px; display: flex; align-items: center; gap: 8px; color: #b5b5b5; font-family: Inter, sans-serif; font-size: 25px; letter-spacing: .12px; padding-bottom: 2px; }
.recalc i { width: 28px; height: 28px; border: 1px solid #d2d2d2; border-radius: 6px; background: #f2f2f2; }
.hr-b { margin: 127px 40px 0 18px; }
.ok { width: 136px; height: 40px; margin: 34px 0 0 860px; border-radius: 9px; background: linear-gradient(#2b8fff, #0076ff); box-shadow: 0 1px 2px rgba(0,60,160,.4); color: #fff; text-align: center; line-height: 37px; font-size: 25px; }
.edge { position: absolute; right: -9px; top: 795px; width: 10px; height: 150px; border-radius: 5px; box-shadow: 0 0 24px rgba(0,0,0,.25); background: #ccc; }
```
